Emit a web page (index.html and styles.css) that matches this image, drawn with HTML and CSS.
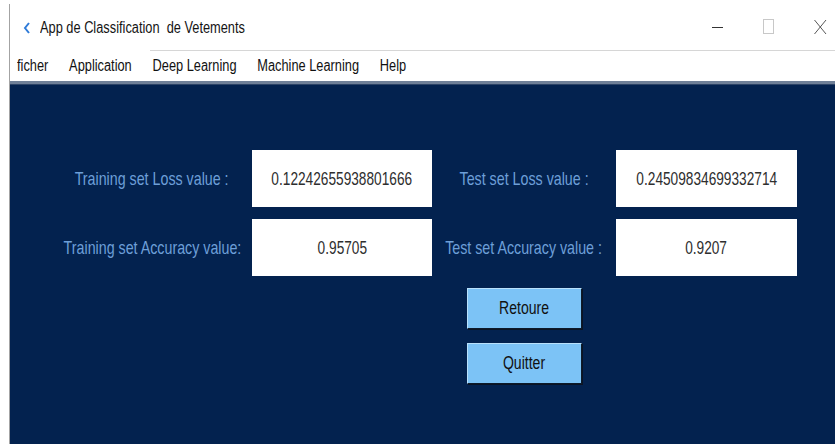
FILE: index.html
```html
<!DOCTYPE html>
<html lang="fr">
<head>
<meta charset="utf-8">
<title>App de Classification de Vetements</title>
<link rel="stylesheet" href="styles.css">
</head>
<body>
<div class="window">
  <header class="titlebar">
    <div class="title">
      <svg class="app-icon" width="8" height="12" viewBox="0 0 8 12"><path d="M6 1 L2 6 L6 11" fill="none" stroke="#2f7bd8" stroke-width="2"/></svg>
      <span class="title-text">App de Classification&nbsp; de Vetements</span>
    </div>
    <div class="controls">
      <svg class="ctl" width="12" height="16" viewBox="0 0 12 16"><path d="M0 8.5 H11" stroke="#333" stroke-width="1"/></svg>
      <svg class="ctl" width="12" height="16" viewBox="0 0 12 16"><rect x="0.5" y="0.5" width="10" height="14" fill="none" stroke="#c8c8c8" stroke-width="1"/></svg>
      <svg class="ctl" width="13" height="16" viewBox="0 0 13 16"><path d="M0.5 1 L12 15 M12 1 L0.5 15" stroke="#444" stroke-width="0.9" fill="none"/></svg>
    </div>
  </header>
  <nav class="menubar">
    <div class="menu-items">
      <span class="menu-item">ficher</span>
      <span class="menu-item">Application</span>
      <span class="menu-item">Deep Learning</span>
      <span class="menu-item">Machine Learning</span>
      <span class="menu-item">Help</span>
    </div>
  </nav>
  <main class="panel">
    <div class="results">
      <div class="label"><span>Training set Loss value :</span></div>
      <div class="value"><span>0.12242655938801666</span></div>
      <div class="label"><span>Test set Loss value :</span></div>
      <div class="value"><span>0.24509834699332714</span></div>

      <div class="label"><span>Training set Accuracy value:</span></div>
      <div class="value"><span>0.95705</span></div>
      <div class="label"><span>Test set Accuracy value :</span></div>
      <div class="value"><span>0.9207</span></div>

      <button class="btn btn-back"><span>Retoure</span></button>
      <button class="btn btn-quit"><span>Quitter</span></button>
    </div>
  </main>
</div>
</body>
</html>
```
FILE: styles.css
```css
html, body {
  margin: 0;
  height: 100%;
  background: #ffffff;
  overflow: hidden;
}

body {
  font-family: "Liberation Sans", Arial, sans-serif;
}

.window {
  margin: 4px 0 0 9px;
  height: 440px;
  border-left: 1px solid #a3a3a3;
  display: flex;
  flex-direction: column;
}

/* title bar */
.titlebar {
  height: 46px;
  flex: none;
  display: flex;
  align-items: center;
  justify-content: space-between;
}

.title {
  display: flex;
  align-items: center;
  gap: 9px;
  padding: 2px 0 0 13px;
  font-size: 16px;
  color: #141414;
}

/* narrow UI face: the regular face squeezed horizontally */
.title-text {
  display: inline-block;
  transform: scaleX(0.8);
  transform-origin: left center;
  white-space: nowrap;
}

.controls {
  display: flex;
  align-items: center;
  gap: 39px;
  padding: 0 8px 0 0;
}

/* menu bar */
.menubar {
  height: 30px;
  flex: none;
  display: flex;
  align-items: center;
  padding: 1px 0 0 7px;
  font-size: 16px;
  color: #111;
  background: linear-gradient(#d6d6d6, #d6d6d6) no-repeat 140px 0 / 100% 1px;
}

.menu-items {
  display: flex;
  gap: 26px;
  white-space: nowrap;
  transform: scaleX(0.8);
  transform-origin: left center;
}

/* results panel */
.panel {
  flex: 1;
  background: #03224f;
  border-top: 3px solid #6f8098;
  box-shadow: inset 0 1px 0 #2d4467;
  padding: 66px 0 0 42px;
}

.results {
  display: grid;
  grid-template-columns: 200px 180px 184px 181px;
  grid-template-rows: 57px 57px 41px 41px;
  row-gap: 12px;
}

.label {
  display: flex;
  align-items: center;
  justify-content: center;
  font-size: 19px;
  color: #6d9fd8;
  white-space: nowrap;
}

.label span {
  display: inline-block;
  transform: scaleX(0.75);
}

.value {
  display: flex;
  align-items: center;
  justify-content: center;
  background: #ffffff;
  font-size: 19px;
  color: #2e2e2e;
  white-space: nowrap;
}

.value span {
  display: inline-block;
  transform: scaleX(0.72);
}

.btn {
  grid-column: 3;
  justify-self: center;
  width: 115px;
  height: 41px;
  font-family: inherit;
  font-size: 18px;
  color: #111;
  background: #7cc3f6;
  border: 1px solid;
  border-color: #b9e1fb #0e1a2a #0e1a2a #b9e1fb;
  box-shadow: 1px 1px 0 #0a1424;
  padding: 0;
}

.btn span {
  display: inline-block;
  transform: scaleX(0.78);
}

.btn-quit {
  margin-top: 2px;
}
```
